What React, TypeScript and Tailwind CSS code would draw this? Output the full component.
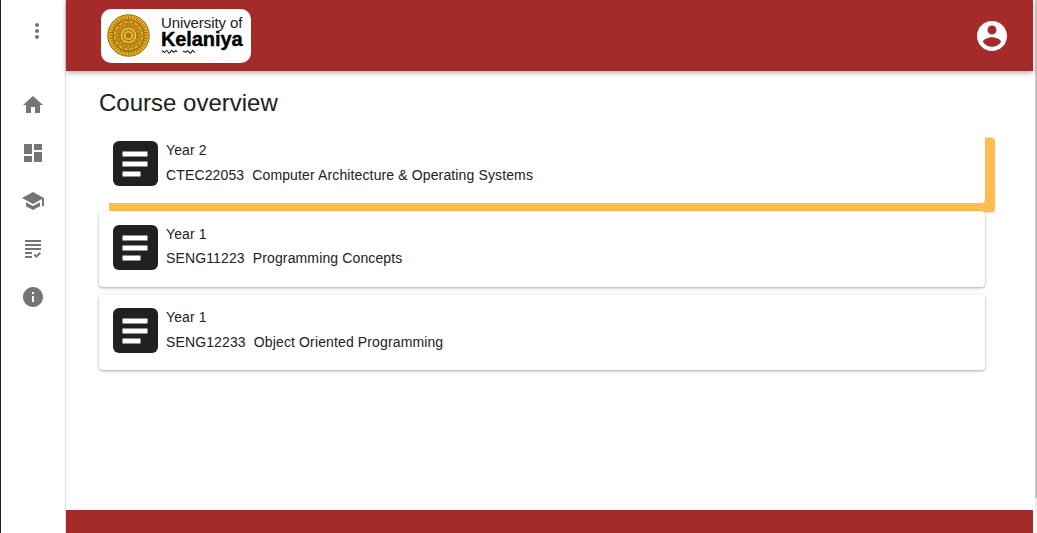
const sans = { fontFamily: '"Liberation Sans", Arial, sans-serif' };

function Icon({ d, size = 24, className = "" }: { d: string; size?: number; className?: string }) {
  return (
    <svg width={size} height={size} viewBox="0 0 24 24" className={className} fill="currentColor">
      <path d={d} />
    </svg>
  );
}

const navIcons = [
  "M10 20v-6h4v6h5v-8h3L12 3 2 12h3v8z",
  "M3 13h8V3H3v10zm0 8h8v-6H3v6zm10 0h8V11h-8v10zm0-18v6h8V3h-8z",
  "M5 13.18v4L12 21l7-3.82v-4L12 17l-7-3.82zM12 3L1 9l11 6 9-4.91V17h2V9L12 3z",
  "M4 7h16v2H4V7zm0 6h16v-2H4v2zm0 4h7v-2H4v2zm0 4h7v-2H4v2zm11.41-2.83L14 16.75l-1.41 1.41L15.41 21 20 16.42 18.58 15l-3.17 3.17zM4 3v2h16V3H4z",
  "M12 2C6.48 2 2 6.48 2 12s4.48 10 10 10 10-4.48 10-10S17.52 2 12 2zm1 15h-2v-6h2v6zm0-8h-2V7h2v2z",
];

function Seal() {
  const petals = Array.from({ length: 16 }, (_, i) => i * 22.5);
  const ticks = Array.from({ length: 40 }, (_, i) => i * 9);
  return (
    <svg width="43" height="43" viewBox="0 0 44 44" className="shrink-0">
      <circle cx="22" cy="22" r="21.5" fill="#e6ae1e" />
      <circle cx="22" cy="22" r="21.2" fill="none" stroke="#7a5510" strokeWidth="0.8" />
      <circle cx="22" cy="22" r="16.5" fill="#8a6414" />
      {ticks.map((a) => (
        <rect key={a} x="21.6" y="2.4" width="0.8" height="3.2" fill="#8a6414" transform={`rotate(${a} 22 22)`} />
      ))}
      <circle cx="22" cy="22" r="15.2" fill="#efb92a" />
      {petals.map((a) => (
        <ellipse key={a} cx="22" cy="11" rx="2.1" ry="3.4" fill="#c98d18" stroke="#7a5510" strokeWidth="0.4" transform={`rotate(${a} 22 22)`} />
      ))}
      <circle cx="22" cy="22" r="8.5" fill="#f5c838" stroke="#8a6414" strokeWidth="0.8" />
      {petals.map((a) => (
        <circle key={a} cx="22" cy="16.5" r="1.1" fill="#a8741a" transform={`rotate(${a} 22 22)`} />
      ))}
      <circle cx="22" cy="22" r="3" fill="#a8741a" />
    </svg>
  );
}

function Logo() {
  return (
    <div className="w-[150px] h-[54px] bg-white rounded-[10px] flex items-center pl-[6px] shrink-0">
      <Seal />
      <div className="ml-[11px] -mt-[2px] flex flex-col text-black" style={sans}>
        <span className="text-[15px] leading-[14px] tracking-[-0.1px] text-[#222]">University of</span>
        <span className="text-[20px] leading-[18px] font-bold tracking-[-0.1px] [-webkit-text-stroke:0.4px_black]">Kelaniya</span>
        <svg width="44" height="6" viewBox="0 0 44 6">
          <path d="M1 4c1-3 2 2 3 0s2-2 3 0 2 1 3-1 2 2 3 1 2-2 3 0M22 4c1-2 2 1 3 0s1-2 3 0 2 1 3-1 2 2 3 1" fill="none" stroke="#222" strokeWidth="1.1" />
        </svg>
      </div>
    </div>
  );
}

function CourseIcon() {
  return (
    <svg width="45" height="45" viewBox="0 0 45 45" className="shrink-0">
      <rect width="45" height="45" rx="6" fill="#212121" />
      <rect x="9.5" y="10.5" width="25" height="5" fill="#fff" />
      <rect x="9.5" y="20.5" width="25" height="5" fill="#fff" />
      <rect x="9.5" y="30.5" width="18" height="5" fill="#fff" />
    </svg>
  );
}

function Card({ year, code, name, active }: { year: string; code: string; name: string; active?: boolean }) {
  return (
    <div
      className={
        "w-[886px] h-[75.5px] bg-white rounded-[4px] flex items-start pl-[14px] pt-[13.5px] " +
        (active
          ? "shadow-[10px_9.5px_0_0_#ffbd4f]"
          : "relative shadow-[0_1px_3px_rgba(0,0,0,0.35)]")
      }
    >
      <CourseIcon />
      <div className="ml-[8px] -mt-[1px] text-[14px] tracking-[0.13px] text-[#212121] whitespace-pre leading-[20px] flex flex-col gap-[4.5px]" style={sans}>
        <span>{year}</span>
        <span>{code + "  " + name}</span>
      </div>
    </div>
  );
}

export default function App() {
  return (
    <div className="flex w-[1037px] h-[533px] overflow-hidden bg-white" style={sans}>
      <aside className="w-[66px] shrink-0 border-l border-l-[#222] border-r border-r-[#ddd] flex flex-col items-center text-[#757575]">
        <div className="mt-[19px] mb-[50px] h-[24px] ml-[8px]">
          <Icon d="M12 8c1.1 0 2-.9 2-2s-.9-2-2-2-2 .9-2 2 .9 2 2 2zm0 2c-1.1 0-2 .9-2 2s.9 2 2 2 2-.9 2-2-.9-2-2-2zm0 6c-1.1 0-2 .9-2 2s.9 2 2 2 2-.9 2-2-.9-2-2-2z" />
        </div>
        <nav className="flex flex-col gap-[24px]">
          {navIcons.map((d) => (
            <Icon key={d} d={d} />
          ))}
        </nav>
      </aside>
      <div className="flex-1 flex flex-col min-w-0">
        <header className="h-[71px] shrink-0 bg-[#a52a2a] shadow-[0_2px_5px_rgba(0,0,0,0.3)] flex items-center justify-between pl-[35px] pr-[23px] relative z-10">
          <Logo />
          <Icon size={36} className="text-white" d="M12 2C6.48 2 2 6.48 2 12s4.48 10 10 10 10-4.48 10-10S17.52 2 12 2zm0 3c1.66 0 3 1.34 3 3s-1.34 3-3 3-3-1.34-3-3 1.34-3 3-3zm0 14.2c-2.5 0-4.71-1.28-6-3.22.03-1.99 4-3.08 6-3.08 1.99 0 5.97 1.09 6 3.08-1.29 1.94-3.5 3.22-6 3.22z" />
        </header>
        <main className="flex-1 pl-[33px] pt-[18px]">
          <h1 className="text-[24px] leading-[28px] text-[#212121] font-normal">Course overview</h1>
          <div className="mt-[10.5px] flex flex-col gap-[8px]">
            <Card active year="Year 2" code="CTEC22053" name="Computer Architecture & Operating Systems" />
            <Card year="Year 1" code="SENG11223" name="Programming Concepts" />
            <Card year="Year 1" code="SENG12233" name="Object Oriented Programming" />
          </div>
        </main>
        <footer className="h-[23px] shrink-0 bg-[#a52a2a]" />
      </div>
      <div className="w-[4px] shrink-0 flex flex-col bg-white pl-[2px]">
        <div className="h-[498px] bg-[#c4c4c4]" />
        <div className="flex-1 bg-[#efefef]" />
      </div>
    </div>
  );
}
